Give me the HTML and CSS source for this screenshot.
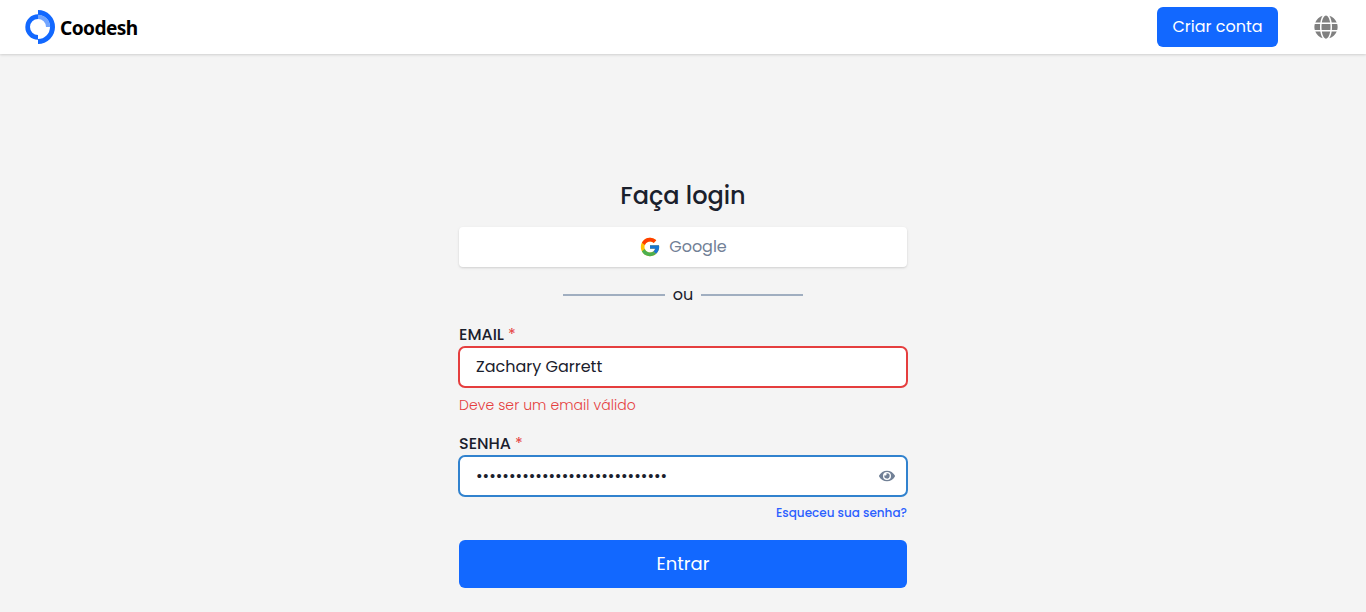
FILE: index.html
```html
<!DOCTYPE html>
<html lang="pt-BR">
<head>
<meta charset="utf-8">
<title>Coodesh</title>
<link rel="stylesheet" href="styles.css">
</head>
<body>
<header class="topbar">
  <a class="brand">
    <svg class="brand-mark" width="32" height="34" viewBox="0 0 32 34">
      <path fill="#1268ff" d="M13 0a17 17 0 0 1 0 34v-5a12 12 0 0 0 0-24z"/>
      <path fill="#1268ff" d="M13 4.300a12.700 12.700 0 0 0 0 25.400v-4.700a8 8 0 0 1 0-16z"/>
      <path fill="#72a5ff" d="M13 4.800a12.200 12.200 0 0 1 12.200 12.200h-4.200a8 8 0 0 0-8-8z"/>
    </svg>
    <span class="brand-name">Coodesh</span>
  </a>
  <div class="actions">
    <button class="btn signup">Criar conta</button>
    <svg class="globe" width="24" height="24" viewBox="0 0 496 512" fill="#808080"><path d="M336.500 160C322 70.700 287.800 8 248 8s-74 62.700-88.500 152h177zM152 256c0 22.200 1.200 43.500 3.300 64h185.300c2.100-20.500 3.300-41.800 3.300-64s-1.200-43.500-3.300-64H155.300c-2.100 20.500-3.300 41.800-3.300 64zm324.700-96c-28.600-67.900-86.500-120.400-158-141.600 24.400 33.800 41.200 84.700 50 141.600h108zM177.200 18.400C105.800 39.600 47.800 92.100 19.300 160h108c8.700-56.900 25.500-107.800 49.900-141.600zM487.400 192H372.700c2.100 21 3.300 42.500 3.300 64s-1.200 43-3.300 64h114.600c5.500-20.500 8.600-41.800 8.600-64s-3.100-43.500-8.500-64zM120 256c0-21.500 1.200-43 3.300-64H8.600C3.200 212.500 0 233.800 0 256s3.200 43.500 8.600 64h114.600c-2-21-3.200-42.500-3.200-64zm39.500 96c14.500 89.300 48.700 152 88.500 152s74-62.700 88.500-152h-177zm159.300 141.600c71.400-21.200 129.400-73.700 158-141.600h-108c-8.800 56.900-25.600 107.800-50 141.600zM19.300 352c28.600 67.900 86.500 120.400 158 141.600-24.400-33.800-41.200-84.700-50-141.600h-108z"/></svg>
  </div>
</header>
<main class="login">
  <h1 class="title">Faça login</h1>
  <button class="google">
    <svg width="22" height="22" viewBox="0 0 48 48"><path fill="#FFC107" d="M43.600 20H24v8h11.300C33.700 32.700 29.200 36 24 36c-6.600 0-12-5.400-12-12s5.400-12 12-12c3.100 0 5.800 1.200 8 3l5.700-5.600C34 6.100 29.300 4 24 4 13 4 4 13 4 24s9 20 20 20 20-9 20-20c0-1.300-.1-2.700-.4-4z"/><path fill="#FF3D00" d="M6.300 14.700l6.600 4.800C14.700 15.100 19 12 24 12c3.100 0 5.800 1.200 8 3l5.700-5.600C34 6.100 29.300 4 24 4 16.300 4 9.700 8.300 6.300 14.700z"/><path fill="#4CAF50" d="M24 44c5.200 0 9.900-2 13.400-5.200l-6.200-5.200C29.200 35.100 26.700 36 24 36c-5.200 0-9.600-3.300-11.300-7.900l-6.500 5C9.500 39.600 16.200 44 24 44z"/><path fill="#1976D2" d="M43.600 20H24v8h11.300c-.8 2.200-2.200 4.200-4.100 5.600l6.200 5.200C37 39.200 44 34 44 24c0-1.300-.1-2.700-.4-4z"/></svg>
    <span class="google-label">Google</span>
  </button>
  <div class="divider"><span class="rule"></span><span class="or">ou</span><span class="rule"></span></div>
  <label class="label"><span>EMAIL</span><span class="star">*</span></label>
  <div class="field invalid"><span class="value">Zachary Garrett</span></div>
  <p class="error">Deve ser um email válido</p>
  <label class="label"><span>SENHA</span><span class="star">*</span></label>
  <div class="field focused">
    <span class="dots">•••••••••••••••••••••••••••••</span>
    <svg class="eye" width="16" height="16" viewBox="0 0 576 512" fill="#718096"><path d="M572.500 241.400C518.300 135.600 410.900 64 288 64S57.700 135.600 3.500 241.400a32.400 32.400 0 0 0 0 29.200C57.700 376.400 165.100 448 288 448s230.300-71.600 284.500-177.400a32.400 32.400 0 0 0 0-29.200zM288 400a144 144 0 1 1 144-144 143.900 143.900 0 0 1-144 144zm0-240a95.300 95.300 0 0 0-25.300 3.800 47.900 47.900 0 0 1-66.900 66.900A95.800 95.800 0 1 0 288 160z"/></svg>
  </div>
  <a class="forgot">Esqueceu sua senha?</a>
  <button class="btn submit">Entrar</button>
</main>
</body>
</html>
```
FILE: styles.css
```css
* { box-sizing: border-box; margin: 0; }
body {
  height: 612px;
  overflow: hidden;
  background: #f4f4f4;
  color: #1a202c;
  font: 16px/24px Poppins, Inter, sans-serif;
}
button { border: 0; font: inherit; padding: 0; }
.topbar {
  display: flex;
  align-items: center;
  justify-content: space-between;
  height: 54px;
  padding: 0 28px 0 25px;
  background: #fff;
  box-shadow: 0 1px 3px rgba(0,0,0,.1), 0 1px 2px rgba(0,0,0,.06);
}
.brand { display: flex; align-items: center; gap: 3px; }
.brand-name {
  padding-top: 1px;
  font: 700 20px/28px "Noto Sans", sans-serif;
  color: #000;
  letter-spacing: -.6px;
  transform: scaleX(.955);
  transform-origin: left;
}
.actions { display: flex; align-items: center; gap: 36px; }
.btn { background: #1268ff; color: #fff; border-radius: 6px; }
.signup { width: 121px; height: 40px; }
.login { display: flex; flex-direction: column; width: 448px; margin: 124px auto 0; }
.title { font-size: 24px; line-height: 36px; font-weight: 500; text-align: center; }
.google {
  display: flex; align-items: center; justify-content: center; gap: 8px;
  height: 40px; margin-top: 13px; background: #fff; color: #718096; border-radius: 4px;
  box-shadow: 0 1px 3px rgba(0,0,0,.1), 0 1px 2px rgba(0,0,0,.06);
}
.divider { display: flex; align-items: center; justify-content: center; gap: 8px; height: 24px; margin-top: 16px; }
.rule { width: 102px; height: 2px; background: #a0aec0; }
.label { display: flex; gap: 4px; height: 23px; margin-top: 16px; font-weight: 500; }
.star { color: #e53e3e; font-weight: 400; }
.field {
  display: flex; align-items: center; justify-content: space-between;
  width: 450px; height: 42px; margin-left: -1px; padding: 0 11px 0 16px;
  background: #fff; border: 2px solid #e53e3e; border-radius: 7px;
}
.focused { border-color: #3182ce; }
.error { margin-top: 7px; margin-bottom: 1px; font-size: 14px; line-height: 20px; font-weight: 300; letter-spacing: .07px; color: #e53e3e; }
.forgot { align-self: flex-end; margin-top: 7px; font-size: 12px; line-height: 18px; font-weight: 500; color: #2b60ff; }
.submit { height: 48px; margin-top: 18px; font-size: 18px; }
```
